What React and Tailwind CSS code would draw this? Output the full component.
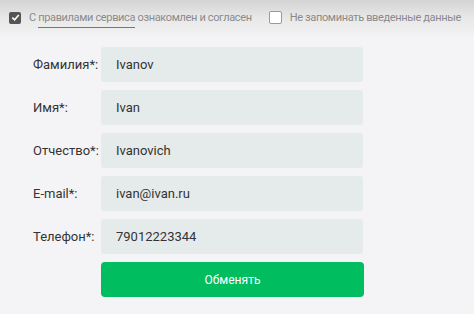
import React from 'react';

const fields = [
  { label: 'Фамилия*:', value: 'Ivanov' },
  { label: 'Имя*:', value: 'Ivan' },
  { label: 'Отчество*:', value: 'Ivanovich' },
  { label: 'E-mail*:', value: 'ivan@ivan.ru' },
  { label: 'Телефон*:', value: '79012223344' },
];

const App = () => {
  return (
    <div className="w-[474px] h-[314px] bg-[#f4f4f6] overflow-hidden" style={{ fontFamily: 'Roboto, "Noto Sans", sans-serif' }}>
      {/* top options bar */}
      <div className="h-[36px] bg-gradient-to-b from-[#d4d4d4] via-[#e8e8e8] to-[#f2f2f4] flex items-start pt-[10px] pl-[9px] text-[11px] tracking-[-0.35px] text-[#8a8a8a] whitespace-nowrap">
        <div className="flex items-center">
          <span className="w-[12px] h-[12px] bg-[#555] rounded-[2px] flex items-center justify-center">
            <svg width="9" height="9" viewBox="0 0 10 10">
              <path d="M1.5 5.2 L4 7.6 L8.6 2.2" stroke="#fff" strokeWidth="1.8" fill="none" />
            </svg>
          </span>
          <span className="ml-[8px] leading-[14px] pt-[1px]">
            С <span className="border-b border-[#777] pb-[3px]">правилами сервиса</span> ознакомлен и согласен
          </span>
        </div>
        <div className="flex items-center ml-[17px]">
          <span className="w-[13px] h-[13px] bg-white border border-[#9a9a9a] rounded-[2px]" />
          <span className="ml-[8px] leading-[14px] pt-[1px]">Не запоминать введенные данные</span>
        </div>
      </div>

      <div className="flex flex-col gap-[8px] mt-[11px]">
        {fields.map((f) => (
          <div key={f.label} className="flex items-center">
            <div className="w-[101px] pl-[33px] text-[13px] text-[#333] whitespace-nowrap">{f.label}</div>
            <div className="w-[262px] h-[35px] bg-[#e5ebea] rounded-[3px] flex items-center pl-[15px] text-[13px] text-[#333]">
              {f.value}
            </div>
          </div>
        ))}
        <div className="pl-[101px]">
          <button type="button" className="w-[263px] h-[35px] bg-[#00be5f] rounded-[4px] text-white text-[12px]">
            Обменять
          </button>
        </div>
      </div>
    </div>
  );
};

export default App;
